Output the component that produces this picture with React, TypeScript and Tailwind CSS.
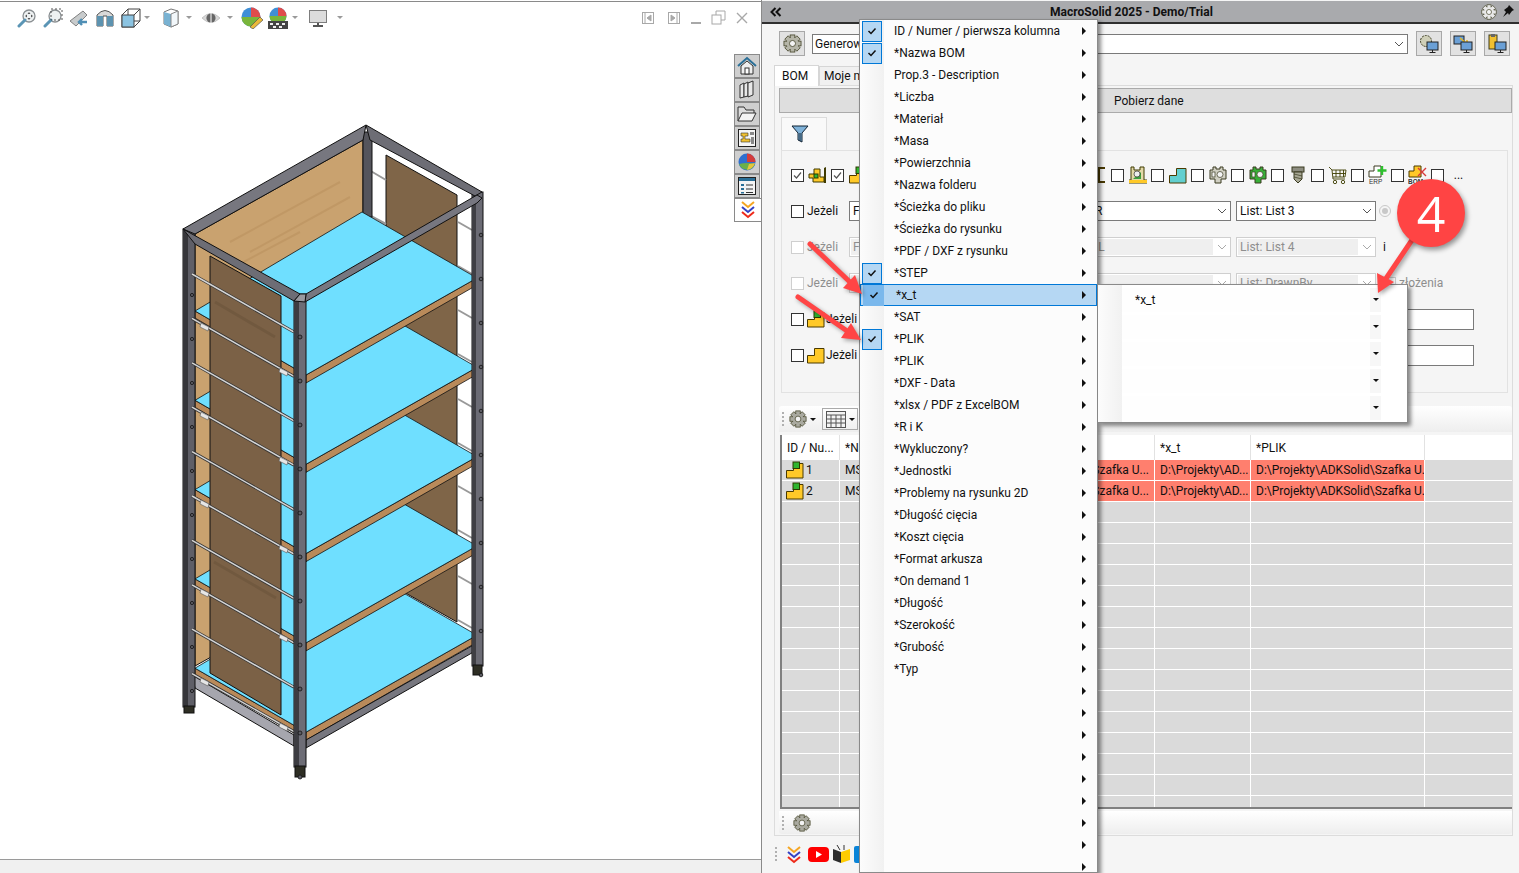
import type { ReactNode } from "react";

const MENU_ITEMS = [
  "ID / Numer / pierwsza kolumna",
  "*Nazwa BOM",
  "Prop.3 - Description",
  "*Liczba",
  "*Materiał",
  "*Masa",
  "*Powierzchnia",
  "*Nazwa folderu",
  "*Ścieżka do pliku",
  "*Ścieżka do rysunku",
  "*PDF / DXF z rysunku",
  "*STEP",
  "*x_t",
  "*SAT",
  "*PLIK",
  "*PLIK",
  "*DXF - Data",
  "*xlsx / PDF z ExcelBOM",
  "*R i K",
  "*Wykluczony?",
  "*Jednostki",
  "*Problemy na rysunku 2D",
  "*Długość cięcia",
  "*Koszt cięcia",
  "*Format arkusza",
  "*On demand 1",
  "*Długość",
  "*Szerokość",
  "*Grubość",
  "*Typ",
  "", "", "", "", "", "", "", "", "",
];
const CHECKED = [0, 1, 11, 12, 14];
const SHELF_STEP = 89.3;

function pts(list: number[][], dy = 0) {
  return list.map(([x, y]) => `${x},${y + dy}`).join(" ");
}

function Caret() {
  return <span className="h-0 w-0 border-x-[3px] border-t-[3px] border-x-transparent border-t-[#9a9a9a]" />;
}

function Gear({ size = 20, fill = "#b5b5a8" }: { size?: number; fill?: string }) {
  const teeth = [0, 45, 90, 135];
  return (
    <svg width={size} height={size} viewBox="0 0 20 20">
      {teeth.map((a) => (
        <rect key={a} x="7.5" y="1" width="5" height="18" fill={fill} stroke="#3d3d20" strokeWidth="0.8" transform={`rotate(${a} 10 10)`} />
      ))}
      <circle cx="10" cy="10" r="6.2" fill={fill} />
      <circle cx="10" cy="10" r="3.2" fill="#f4f4f4" stroke="#3d3d20" strokeWidth="0.8" />
    </svg>
  );
}

function ToolbarIcons() {
  const glass = (
    <>
      <circle cx="12" cy="8" r="6" fill="#eef1f2" stroke="#8a8f92" strokeWidth="1.3" />
      <path d="M8 12 L2 18" stroke="#5b95b5" strokeWidth="3" strokeLinecap="round" />
    </>
  );
  return (
    <div className="flex h-[32px] items-center pl-[17px]">
      <svg className="mr-[6px]" width="20" height="20" viewBox="0 0 20 20">
        {glass}
        <path d="M12 4l1.5 2h-3zM12 12l1.5-2h-3zM8 8l2-1.5v3zM16 8l-2-1.5v3z" fill="#555" />
      </svg>
      <svg className="mr-[6px]" width="20" height="20" viewBox="0 0 20 20">
        {glass}
        <rect x="8" y="1" width="11" height="11" fill="none" stroke="#555" strokeDasharray="2 2" />
      </svg>
      <svg className="mr-[6px]" width="20" height="20" viewBox="0 0 20 20">
        <path d="M1 13 L14 3 L18 7 L7 18 Z" fill="#c8cbcc" stroke="#808080" />
        <path d="M18 14 H10 M13 11 L10 14 L13 17" stroke="#4f8fb5" strokeWidth="2.4" fill="none" />
      </svg>
      <svg className="mr-[6px]" width="20" height="20" viewBox="0 0 20 20">
        <path d="M2 18 V7 Q10 -2 18 7 V18 H12 V8 H8 V18 Z" fill="#d8d8d8" stroke="#555" />
        <rect x="2" y="8" width="6" height="10" fill="#5d93b0" />
        <rect x="12" y="8" width="6" height="10" fill="#5d93b0" />
      </svg>
      <svg className="mr-[3px]" width="20" height="20" viewBox="0 0 20 20">
        <path d="M1 7 L7 1 H19 V13 L13 19 H1 Z" fill="#fff" stroke="#444" />
        <rect x="1" y="7" width="12" height="12" fill="#8cc4e2" stroke="#444" />
        <path d="M7 1 V7 M13 7 L19 1 M13 13 H19" stroke="#444" />
      </svg>
      <Caret />
      <svg className="ml-[11px] mr-[5px]" width="20" height="20" viewBox="0 0 20 20">
        <path d="M3 4 L10 1 L17 3 V16 L10 19 L3 16 Z" fill="#fff" stroke="#777" />
        <path d="M3 4 L10 6 V19 L3 16 Z" fill="#79b2d2" />
        <path d="M10 6 L17 3 V16 L10 19 Z" fill="#f2f7fa" stroke="#888" />
      </svg>
      <Caret />
      <svg className="ml-[9px] mr-[6px]" width="20" height="20" viewBox="0 0 20 20">
        <path d="M1 10 Q10 1 19 10 Q10 19 1 10 Z" fill="#d8d8d8" stroke="#c4c4c4" />
        <circle cx="10" cy="10" r="4.6" fill="#666" />
        <path d="M10 3 V17" stroke="#fff" />
      </svg>
      <Caret />
      <svg className="ml-[8px] mr-[5px]" width="22" height="22" viewBox="0 0 22 22">
        <circle cx="10" cy="10" r="9.5" fill="#3f8fd6" />
        <path d="M10 .5 A9.5 9.5 0 0 1 19.5 10 L10 10 Z" fill="#df4c4c" />
        <path d="M.5 10 H19.5 A9.5 9.5 0 0 1 .5 10 Z" fill="#79b53b" />
        <path d="M9 20 L19 10 L22 13 L12 22 Z" fill="#e9b93a" stroke="#555" strokeWidth=".7" />
      </svg>
      <svg className="mr-[4px]" width="20" height="22" viewBox="0 0 20 22">
        <circle cx="10" cy="9" r="8.5" fill="#3f8fd6" />
        <path d="M10 .5 A8.5 8.5 0 0 1 18.5 9 L10 9 Z" fill="#df4c4c" />
        <path d="M1.5 9 H18.5 A8.5 8.5 0 0 1 10 17.5 A8.5 8.5 0 0 1 1.5 9Z" fill="#79b53b" />
        <rect x="0" y="14" width="20" height="8" fill="#444" />
        <path d="M2 16h3v2H2zM8 16h3v2H8zM14 16h3v2h-3zM5 19h3v2H5zM11 19h3v2h-3z" fill="#eee" />
      </svg>
      <Caret />
      <svg className="ml-[10px] mr-[9px]" width="20" height="20" viewBox="0 0 20 20">
        <rect x="1.5" y="2.5" width="17" height="12" fill="#dcdcdc" stroke="#7d7d7d" />
        <path d="M10 15 V17 M5 18 H15" stroke="#555" strokeWidth="2" />
      </svg>
      <Caret />
    </div>
  );
}

function Cabinet() {
  const rods = Array.from({ length: 10 }, (_, i) => 272 + i * 44.4);
  const sideRods = [220, 264, 308, 352, 397, 441, 484, 528, 574, 618];
  const bolts = Array.from({ length: 11 }, (_, i) => i);
  const clips = [316, 405, 493, 582, 671];
  const shelves = [4, 3, 2, 1, 0];
  return (
    <svg className="shrink-0" width="734" height="826" viewBox="0 32 734 826">
      {/* back panels */}
      <polygon points="195,232 363,138 363,570 195,664" fill="#c9a26f" stroke="#111" />
      <path d="M230 240 L340 180 M250 250 L350 195 M215 275 L300 230" stroke="#b88f5c" strokeWidth="2" opacity=".5" />
      <polygon points="386,153 457,193 457,620 386,580" fill="#7f6548" stroke="#111" />
      {/* rods seen through the open side */}
      <g stroke="#999" strokeWidth="2">
        <line x1="369" y1="168" x2="386" y2="178" />
        <line x1="369" y1="213" x2="386" y2="222" />
        {sideRods.map((y) => (
          <line key={y} x1="458" y1={y} x2="472" y2={y + 8} />
        ))}
      </g>
      <rect x="363" y="130" width="9" height="85" fill="#55555c" stroke="#111" />

      {/* shelves, lowest first */}
      {shelves.map((i) => {
        const dy = i * SHELF_STEP;
        return (
          <g key={i} stroke="#111" strokeWidth=".8">
            <polygon points={pts([[195, 309], [306, 373], [306, 381], [195, 316]], dy)} fill="#b98a5a" />
            <polygon points={pts([[306, 373], [477, 276], [477, 283], [306, 381]], dy)} fill="#b98a5a" />
            <polygon points={pts([[362, 210], [477, 276], [306, 373], [195, 309]], dy)} fill="#6fdfff" />
          </g>
        );
      })}

      {/* bottom rails */}
      <polygon points="306,738 477,641 477,648 306,746" fill="#77777f" stroke="#111" />
      <polygon points="192,673 294,733 294,744 195,686" fill="#a6a6ae" stroke="#111" />

      {/* left leg */}
      <rect x="183" y="227" width="12" height="478" fill="#5f5f67" stroke="#111" />
      <rect x="183" y="227" width="5" height="478" fill="#37373b" />
      <rect x="184" y="704" width="10" height="7" fill="#2e2e24" stroke="#111" />

      {/* front panel and rods */}
      <polygon points="210,254 281,294 281,713 210,671" fill="#7b6146" stroke="#111" />
      <path d="M215 300 L275 335 M220 420 L278 455 M214 560 L276 596" stroke="#6c543b" strokeWidth="3" opacity=".6" />
      <g>
        {rods.map((y) => (
          <g key={y}>
            <line x1="192" y1={y} x2="294" y2={y + 58} stroke="#333" strokeWidth="3" />
            <line x1="192" y1={y} x2="294" y2={y + 58} stroke="#d5d5d5" strokeWidth="1.5" />
          </g>
        ))}
        {clips.map((y) => (
          <g key={y} fill="#e6e6e6" stroke="#555" strokeWidth=".6">
            <polygon points={`201,${y + 5} 209,${y + 9} 208,${y + 13} 200,${y + 9}`} />
            <polygon points={`280,${y + 50} 288,${y + 54} 287,${y + 58} 279,${y + 54}`} />
          </g>
        ))}
      </g>

      {/* right and front legs */}
      <rect x="472" y="190" width="11" height="474" fill="#6b6b74" stroke="#111" />
      <rect x="472" y="190" width="4" height="474" fill="#3f3f44" />
      <rect x="473" y="663" width="9" height="10" fill="#2e2e24" stroke="#111" />
      <rect x="294" y="292" width="12" height="473" fill="#6d6d76" stroke="#111" />
      <rect x="294" y="292" width="5" height="473" fill="#3d3d42" />
      <rect x="295" y="764" width="10" height="11" fill="#2e2e24" stroke="#111" />
      {bolts.map((i) => (
        <g key={i} fill="#5b5b62" stroke="#111" strokeWidth=".8">
          <circle cx="300" cy={335 + i * 44} r="2" />
          <circle cx="481" cy={233 + i * 44} r="1.8" />
          {i < 10 ? <circle cx="192" cy={293 + i * 44} r="1.6" /> : null}
        </g>
      ))}

      {/* top frame */}
      <g stroke="#111">
        <polygon points="366,123 482,190 475,194 370,138" fill="#6d6d75" />
        <polygon points="183,227 366,123 363,138 195,232" fill="#77777f" />
        <polygon points="183,227 300,292 294,299 195,242" fill="#6d6d75" />
        <polygon points="306,292 477,193 482,196 477,201 305,300" fill="#777780" />
        <polygon points="294,299 300,292 306,292 305,300" fill="#99999f" />
      </g>
    </svg>
  );
}

function SideTabs() {
  const tab = "flex h-[24px] w-[26px] items-center justify-center border border-[#8a8a8a] bg-[#cfcfcf]";
  return (
    <div className="mt-[20px] flex w-[26px] shrink-0 flex-col">
      <div className={tab}>
        <svg width="20" height="20" viewBox="0 0 20 20">
          <path d="M1 10 L10 2 L19 10" fill="none" stroke="#2a6f97" strokeWidth="2" />
          <path d="M4 10 V18 H16 V10 L10 5 Z" fill="#efefef" stroke="#333" />
          <rect x="8" y="12" width="4" height="6" fill="#fff" stroke="#333" />
        </svg>
      </div>
      <div className={tab}>
        <svg width="18" height="20" viewBox="0 0 18 20" fill="#e8e8e8" stroke="#333">
          <path d="M2 5 L6 3 V17 L2 18 Z" />
          <path d="M6 4 L10 2 V16 L6 17 Z" />
          <path d="M10 3 L15 1 V15 L10 17 Z" />
        </svg>
      </div>
      <div className={tab}>
        <svg width="20" height="18" viewBox="0 0 20 18">
          <path d="M1 16 V2 H7 L9 5 H17 V8" fill="#ddd" stroke="#333" />
          <path d="M1 16 L5 8 H19 L15 16 Z" fill="#f3f3f3" stroke="#333" />
        </svg>
      </div>
      <div className={tab}>
        <svg width="18" height="18" viewBox="0 0 18 18">
          <rect x=".5" y=".5" width="17" height="17" fill="#f5f5f5" stroke="#222" />
          <path d="M3 4 H10 V7 H7 V10 H12 V13 H3 V10 H5 V7 H3 Z" fill="#f0c030" stroke="#333" strokeWidth=".6" />
          <rect x="13" y="8" width="3" height="7" fill="#888" />
          <rect x="12" y="3" width="4" height="3" fill="#888" />
        </svg>
      </div>
      <div className={tab}>
        <svg width="18" height="18" viewBox="0 0 18 18">
          <circle cx="9" cy="9" r="8.5" fill="#2f6fd0" />
          <path d="M9 .5 A8.5 8.5 0 0 1 17.5 9 L9 9 Z" fill="#d33c3c" />
          <path d="M1 11 Q9 9 17 11 A8.5 8.5 0 0 1 1 11 Z" fill="#6ab04a" />
          <path d="M9 17 Q15 16 17 10 L11 11 Z" fill="#e5c53c" />
        </svg>
      </div>
      <div className={tab}>
        <svg width="18" height="18" viewBox="0 0 18 18">
          <rect x=".5" y=".5" width="17" height="17" fill="#f4f4f4" stroke="#222" />
          <rect x="1" y="1" width="16" height="3" fill="#2a6f97" />
          <path d="M3 7h3v2H3zM3 11h3v2H3zM3 15h3v1.500H3z" fill="#2a6f97" />
          <path d="M8 8h7M8 12h7M8 15.500h7" stroke="#333" />
        </svg>
      </div>
      <div className="flex h-[24px] w-[27px] items-center justify-center border border-r-0 border-[#8a8a8a] bg-white">
        <Chevrons />
      </div>
    </div>
  );
}

function Chevrons() {
  return (
    <svg width="16" height="19" viewBox="0 0 16 19" fill="none" strokeWidth="2">
      <path d="M2 2 L8 7 L14 2" stroke="#f5a623" />
      <path d="M2 7 L8 12 L14 7" stroke="#3341c5" />
      <path d="M2 12 L8 17 L14 12" stroke="#ee2a1b" />
    </svg>
  );
}

function Check({ checked, faded }: { checked?: boolean; faded?: boolean }) {
  return (
    <span className={`flex h-[13px] w-[13px] shrink-0 items-center justify-center border bg-white ${faded ? "border-[#cfcfcf]" : "border-[#333]"}`}>
      {checked ? (
        <svg width="9" height="9" viewBox="0 0 9 9" fill="none" stroke="#555" strokeWidth="1.2">
          <path d="M1 4.500 L3.500 7 L8 1.500" />
        </svg>
      ) : null}
    </span>
  );
}

function LShape({ green, fill = "#ffc928" }: { green?: boolean; fill?: string }) {
  return (
    <svg width="18" height="18" viewBox="0 0 18 18">
      <path d="M.5 17 V9.500 H7.500 V2.500 H17 V17 Z" fill={fill} stroke="#4a3a00" />
      {green ? <rect x="7" y="1" width="6.500" height="6.500" fill="#2fb52f" stroke="#2d3a00" /> : null}
    </svg>
  );
}

function FilterIcon({ index }: { index: number }) {
  switch (index) {
    case 0:
      return (
        <svg width="19" height="18" viewBox="0 0 19 18">
          <path d="M1 8 H6 V3 H12 V11 H16 V16 H5 V12 H1 Z" fill="#ffc928" stroke="#3f3a00" />
          <rect x="6" y="8" width="4" height="4" fill="#2fb52f" stroke="#2d3a00" />
          <path d="M16 10 V2 L18 1 V17 H16" fill="#3f3a00" />
        </svg>
      );
    case 7:
      return (
        <svg width="18" height="18" viewBox="0 0 18 18" fill="none" stroke="#4a3a00" strokeWidth="2">
          <path d="M16 2 H10 V16 H16" />
        </svg>
      );
    case 8:
      return (
        <svg width="18" height="18" viewBox="0 0 18 18">
          <path d="M2 1 H5 V4 H11 V1 H15 V14 H18 V17 H0 V14 H2 Z" fill="#e3d9a8" stroke="#3f3a00" />
          <rect x="0" y="14" width="18" height="3" fill="#ffc928" />
          <path d="M4 13 L12 6 V13 Z" fill="#3da03d" />
          <circle cx="8" cy="8" r="3" fill="#eee" stroke="#333" strokeWidth=".7" />
        </svg>
      );
    case 9:
      return <LShape fill="#62cfcf" />;
    case 10:
    case 11: {
      const c = index === 10 ? "#d0cfc2" : "#38b038";
      return (
        <svg width="18" height="18" viewBox="0 0 18 18">
          <path d="M4 1 H7 V3 H11 V1 H14 V4 H17 V13 H12 V17 H6 V13 H1 V4 H4 Z" fill={c} stroke="#3a3a20" />
          <rect x="3" y="6" width="3" height="5" fill="#f4f4f4" stroke="#3a3a20" strokeWidth=".7" />
          <circle cx="11" cy="8.500" r="3" fill="#f4f4f4" stroke="#3a3a20" strokeWidth=".7" />
        </svg>
      );
    }
    case 12:
      return (
        <svg width="14" height="18" viewBox="0 0 14 18">
          <rect x="1" y="1" width="12" height="5" fill="#8d8d80" stroke="#3a3a20" />
          <path d="M3 6 H11 V13 L7 17 L3 13 Z" fill="#a7a794" stroke="#3a3a20" />
          <path d="M3 8 L11 10 M3 11 L11 13" stroke="#3a3a20" strokeWidth=".7" />
        </svg>
      );
    case 13:
      return (
        <svg width="19" height="19" viewBox="0 0 19 19" fill="none" stroke="#3d3d00" strokeWidth=".9">
          <path d="M1 1 L4 4 L5 13 H17" />
          <path d="M4 4 H18 L17 11 H5 M8 4 V11 M12 4 V11 M15.500 4 V11 M4.500 7.500 H17.500" />
          <circle cx="7" cy="16" r="1.700" />
          <circle cx="15" cy="16" r="1.700" />
        </svg>
      );
    case 14:
      return (
        <svg width="19" height="20" viewBox="0 0 19 20">
          <path d="M1 12 V6 H6 V1 H13 V12 Z" fill="#fff" stroke="#3a3a20" />
          <path d="M14 1 V10 M9.500 5.500 H18.500" stroke="#2fc02f" strokeWidth="2.400" />
          <text x="1" y="19" fontSize="6.500" fill="#333" fontFamily="Liberation Sans">ERP</text>
        </svg>
      );
    case 15:
      return (
        <svg width="19" height="20" viewBox="0 0 19 20">
          <path d="M1 12 V6 H6 V1 H13 V12 Z" fill="#ffc928" stroke="#4a3a00" />
          <path d="M10 3 L18 11 M18 3 L10 11" stroke="#d63a3a" strokeWidth="1.400" />
          <text x="0" y="19" fontSize="6.500" fontWeight="700" fill="#333" fontFamily="Liberation Sans">BOM</text>
        </svg>
      );
    case 1:
      return <LShape green />;
    case 16:
      return <span className="self-end pb-[1px] pl-[2px] leading-none">...</span>;
    default:
      return <LShape />;
  }
}

function Combo({ className, text, disabled, inset }: { className: string; text?: string; disabled?: boolean; inset?: string }) {
  return (
    <div className={`flex h-[20px] shrink-0 items-center border bg-white ${disabled ? "border-[#cfcfcf] text-[#8e8e8e]" : "border-[#7a7a7a]"} ${className}`}>
      <span className={`mx-[1px] h-[16px] flex-1 overflow-hidden whitespace-nowrap pl-[2px] leading-[16px] ${disabled ? "bg-[#efefef]" : ""} ${inset ?? ""}`}>{text}</span>
      <svg className="mx-[3px] shrink-0" width="10" height="6" viewBox="0 0 10 6" fill="none" stroke={disabled ? "#aaa" : "#555"}>
        <path d="M1 1 L5 5 L9 1" />
      </svg>
    </div>
  );
}

function FormRow({ children, faded, icon }: { children: ReactNode; faded?: boolean; icon?: ReactNode }) {
  return (
    <div className={`flex h-[36px] items-center pl-[9px] ${faded ? "text-[#8e8e8e]" : ""}`}>
      <Check faded={faded} />
      {icon ? <span className="ml-[3px] flex w-[19px] shrink-0">{icon}</span> : null}
      <span className={`w-[44px] shrink-0 pl-[3px] ${icon ? "-ml-[22px] w-[44px] pl-[22px]" : ""}`}>Jeżeli</span>
      {children}
    </div>
  );
}

function IconButton({ children }: { children: ReactNode }) {
  return <div className="flex h-[25px] w-[26px] items-center justify-center border border-[#a8a8a8] bg-[#e2e2e2]">{children}</div>;
}

function Monitor({ children }: { children: ReactNode }) {
  return (
    <svg width="20" height="20" viewBox="0 0 20 20">
      {children}
      <rect x="8" y="8" width="11" height="8" fill="#6ba0d6" stroke="#222" />
      <path d="M13.500 16 V18 M10.500 18.500 H16.500" stroke="#222" />
    </svg>
  );
}

function DataGrid() {
  const widths = ["w-[58px]", "w-[164px]", "w-[151px]", "w-[96px]", "w-[174px]"];
  const headers = ["ID / Nu...", "*Nazwa BOM", "", "*x_t", "*PLIK"];
  const blanks = Array.from({ length: 15 }, (_, i) => i);
  const rows = ["1", "2"];
  return (
    <div className="ml-[5px] mt-[3px] h-[374px] w-[732px] overflow-hidden border-b-2 border-l-2 border-[#808080] bg-[#dadada]">
      <div className="flex h-[25px] bg-white">
        {headers.map((h, i) => (
          <div key={i} className={`${widths[i]} flex shrink-0 items-center border-r border-[#e2e2e2] pl-[5px]`}>{h}</div>
        ))}
      </div>
      {rows.map((r) => (
        <div key={r} className="flex h-[21px] border-b border-white">
          <div className={`${widths[0]} flex shrink-0 items-center gap-[2px] border-r border-white pl-[4px]`}>
            <LShape green />
            {r}
          </div>
          <div className={`${widths[1]} flex shrink-0 items-center border-r border-white pl-[5px]`}>MS</div>
          <div className={`${widths[2]} flex shrink-0 items-center justify-end overflow-hidden whitespace-nowrap border-r border-white bg-[#ff7f6e] pr-[5px]`}>D:\Projekty\ADKSolid\Szafka U...</div>
          <div className={`${widths[3]} flex shrink-0 items-center overflow-hidden whitespace-nowrap border-r border-white bg-[#ff7f6e] pl-[5px]`}>D:\Projekty\AD...</div>
          <div className={`${widths[4]} flex shrink-0 items-center overflow-hidden whitespace-nowrap border-r border-white bg-[#ff7f6e] pl-[5px]`}>D:\Projekty\ADKSolid\Szafka U...</div>
        </div>
      ))}
      {blanks.map((b) => (
        <div key={b} className="flex h-[21px] border-b border-white">
          {widths.map((w) => (
            <div key={w} className={`${w} shrink-0 border-r border-white`} />
          ))}
        </div>
      ))}
    </div>
  );
}

function Gripper() {
  return (
    <div className="flex flex-col gap-[2px]">
      {[0, 1, 2, 3].map((i) => (
        <span key={i} className="h-[2px] w-[2px] bg-[#b0b0b0]" />
      ))}
    </div>
  );
}

function MacroPanel() {
  const filterIcons = Array.from({ length: 17 }, (_, i) => i);
  return (
    <div className="relative h-[873px] flex-1 overflow-hidden border-l border-[#8a8a8a] bg-[#f5f5f5] text-[12px] text-[#111]">
      {/* title bar */}
      <div className="mt-[1px] flex h-[23px] items-center border-b-2 border-[#2f2f2f] bg-[#a9aaad] pl-[8px] pr-[4px]">
        <svg width="12" height="10" viewBox="0 0 12 10" fill="none" stroke="#111" strokeWidth="2">
          <path d="M5.500 1 L1.500 5 L5.500 9 M10.500 1 L6.500 5 L10.500 9" />
        </svg>
        <span className="flex-1 text-center font-bold">MacroSolid 2025 - Demo/Trial</span>
        <Gear size={16} fill="#e8e8e8" />
        <svg className="ml-[3px]" width="15" height="15" viewBox="0 0 15 15" fill="#111">
          <path d="M9 1 L14 6 L12 7 L9 11 L8 9 L3 13 L6 8 L4 6 L8 3 Z" />
        </svg>
      </div>

      {/* generator row */}
      <div className="mt-[7px] flex h-[25px] items-center pl-[17px]">
        <IconButton><Gear size={19} /></IconButton>
        <div className="ml-[7px] flex h-[20px] w-[596px] items-center border border-[#7a7a7a] bg-white pl-[2px]">
          <span className="flex-1">Generowanie</span>
          <svg className="mr-[3px]" width="10" height="6" viewBox="0 0 10 6" fill="none" stroke="#555">
            <path d="M1 1 L5 5 L9 1" />
          </svg>
        </div>
        <div className="ml-[8px] flex gap-[8px]">
          <IconButton>
            <Monitor><circle cx="7" cy="7" r="5.500" fill="#cfcfb8" stroke="#3d3d20" strokeDasharray="2 1" /></Monitor>
          </IconButton>
          <IconButton>
            <Monitor><rect x="1" y="2" width="10" height="8" fill="#6ba0d6" stroke="#222" /><path d="M7 4 L14 10 M14 6 V10 H10" stroke="#e8b820" strokeWidth="1.500" fill="none" /></Monitor>
          </IconButton>
          <IconButton>
            <Monitor><rect x="2" y="1" width="8" height="14" fill="#f0c030" stroke="#3d3d20" /><rect x="4" y="0" width="4" height="3" fill="#666" /></Monitor>
          </IconButton>
        </div>
      </div>

      {/* tabs */}
      <div className="ml-[12px] mt-[8px] flex h-[21px] items-end">
        <div className="z-10 -mb-px flex h-[21px] w-[45px] items-center border border-b-0 border-[#d6d6d6] bg-white pl-[7px]">BOM</div>
        <div className="flex h-[19px] w-[90px] items-center border border-b-0 border-[#d6d6d6] bg-[#f0f0f0] pl-[4px]">Moje miejsca</div>
      </div>
      <div className="ml-[12px] h-[751px] w-[739px] border border-[#dcdcdc] bg-[#f5f5f5]">
        <div className="ml-[4px] mt-[2px] flex h-[25px] w-[733px] items-center border border-[#aaaaaa] bg-[#dedede] pl-[334px]">Pobierz dane</div>

        <div className="ml-[6px] mt-[4px] flex h-[33px] w-[46px] items-center justify-center border border-b-0 border-[#dcdcdc] bg-[#f9f9f9] pr-[8px]">
          <svg width="18" height="18" viewBox="0 0 18 18">
            <path d="M1 1 H17 L11 8 V17 L7 15 V8 Z" fill="#7fb2d9" stroke="#123" />
            <path d="M9 8 V16" stroke="#123" />
          </svg>
        </div>
        <div className="ml-[6px] h-[243px] w-[727px] border border-[#e2e2e2] bg-[#f5f5f5] pt-[6px]">
          <div className="flex h-[36px] items-center pl-[9px]">
            {filterIcons.map((i) => (
              <div key={i} className="flex h-full w-[40px] shrink-0 items-center">
                <Check checked={i < 2} />
                <span className="ml-[4px] flex w-[19px] justify-center"><FilterIcon index={i} /></span>
              </div>
            ))}
          </div>
          <FormRow>
            <Combo className="ml-[1px] w-[149px]" text="F" />
            <Combo className="ml-[5px] w-[228px]" text="R" inset="pl-[90px]" />
            <Combo className="ml-[5px] w-[140px]" text="List: List 3" />
            <span className="ml-[3px] flex h-[12px] w-[12px] items-center justify-center rounded-full border border-[#c8c8c8]">
              <span className="h-[6px] w-[6px] rounded-full bg-[#c8c8c8]" />
            </span>
          </FormRow>
          <FormRow faded>
            <Combo className="ml-[1px] w-[149px]" text="F" disabled />
            <Combo className="ml-[5px] w-[228px]" text="IL" inset="pl-[90px]" disabled />
            <Combo className="ml-[5px] w-[140px]" text="List: List 4" disabled />
            <span className="ml-[7px] text-[#111]">i</span>
          </FormRow>
          <FormRow faded>
            <Combo className="ml-[1px] w-[149px]" disabled />
            <Combo className="ml-[5px] w-[228px]" disabled />
            <Combo className="ml-[5px] w-[140px]" text="List: DrawnBy" disabled />
            <span className="ml-[7px]"><Check faded /></span>
            <span className="ml-[3px]">złożenia</span>
          </FormRow>
          <FormRow icon={<LShape green />}>
            <div className="ml-auto mr-[33px] h-[21px] w-[67px] border border-[#7a7a7a] bg-white" />
          </FormRow>
          <FormRow icon={<LShape />}>
            <div className="ml-auto mr-[33px] h-[21px] w-[67px] border border-[#7a7a7a] bg-white" />
          </FormRow>
        </div>

        <div className="ml-[4px] mt-[13px] flex h-[26px] w-[733px] items-center rounded-t-[3px] bg-gradient-to-b from-white to-[#eeeeee] pl-[3px]">
          <Gripper />
          <span className="ml-[5px]"><Gear size={18} fill="#aaaaa0" /></span>
          <span className="ml-[3px] h-0 w-0 border-x-[3px] border-t-[3px] border-x-transparent border-t-[#111]" />
          <span className="ml-[6px] flex h-[22px] w-[36px] items-center gap-[3px] border border-[#aaa] pl-[3px]">
            <svg width="20" height="17" viewBox="0 0 20 17" fill="#f3f3f3" stroke="#555">
              <rect x=".5" y=".5" width="19" height="16" />
              <path d="M.5 4 H19.500 M.5 8 H19.500 M.5 12 H19.500 M5 4 V16 M10 4 V16 M15 4 V16" />
            </svg>
            <span className="h-0 w-0 border-x-[3px] border-t-[3px] border-x-transparent border-t-[#111]" />
          </span>
        </div>
        <DataGrid />
        <div className="ml-[4px] mt-[2px] flex h-[23px] w-[733px] items-center rounded-b-[3px] bg-gradient-to-b from-white to-[#eeeeee] pl-[3px]">
          <Gripper />
          <span className="ml-[9px]"><Gear size={18} fill="#aaaaa0" /></span>
        </div>
      </div>

      {/* bottom links */}
      <div className="ml-[12px] mt-[2px] flex h-[32px] items-center gap-[3px] pl-[1px]">
        <Gripper />
        <span className="ml-[6px]"><Chevrons /></span>
        <svg className="ml-[3px]" width="21" height="15" viewBox="0 0 21 15">
          <rect width="21" height="15" rx="4" fill="#ff0000" />
          <path d="M8 4 L14 7.500 L8 11 Z" fill="#fff" />
        </svg>
        <svg className="ml-[1px]" width="17" height="18" viewBox="0 0 17 18">
          <path d="M0 4 L8 7 V18 L0 15 Z" fill="#2b2b2b" />
          <path d="M8 7 L17 4 V15 L8 18 Z" fill="#ffcc00" />
          <path d="M4 0 L7 5 M11 0 V5" stroke="#333" />
        </svg>
        <span className="ml-[1px] h-[17px] w-[10px] rounded-[2px] bg-[#0a84d8]" />
      </div>

      {/* column chooser menu */}
      <div className="absolute left-[97px] top-[19px] h-[854px] w-[239px] overflow-hidden border border-[#8a8a8a] bg-[#fcfcfc] shadow-[3px_3px_4px_rgba(0,0,0,0.45)]">
        <div className="absolute bottom-0 left-0 top-0 w-[24px] bg-gradient-to-r from-[#fcfcfc] to-[#f1f1f1]" />
        {MENU_ITEMS.map((label, i) => {
          const active = i === 12;
          const checked = CHECKED.includes(i);
          return (
            <div key={i} className={`relative flex h-[22px] items-center ${active ? "border border-[#0078d7] bg-[#b5d7f3]" : ""}`}>
              <span
                className={`ml-[2px] flex h-[21px] w-[20px] shrink-0 items-center justify-center ${active ? "-ml-px w-[21px] bg-[#7ab8ec]" : ""} ${checked && !active ? "border border-[#0078d7] bg-[#b5d7f3]" : ""}`}
              >
                {checked ? (
                  <svg width="10" height="8" viewBox="0 0 10 8" fill="none" stroke="#111" strokeWidth="1.500">
                    <path d="M1.500 4 L4 6.500 L8.500 1.500" />
                  </svg>
                ) : null}
              </span>
              <span className={`flex-1 whitespace-nowrap ${active ? "ml-[12px]" : "ml-[12px]"}`}>{label}</span>
              <span className={`h-0 w-0 border-y-[4px] border-l-[4px] border-y-transparent border-l-[#111] ${active ? "mr-[10px]" : "mr-[11px]"}`} />
            </div>
          );
        })}
      </div>

      {/* submenu with the column fields */}
      <div className="absolute left-[336px] top-[284px] h-[139px] w-[310px] border border-[#8a8a8a] border-l-0 bg-white shadow-[3px_3px_4px_rgba(0,0,0,0.45)]">
        <div className="flex h-full">
          <div className="w-[24px] bg-gradient-to-r from-[#fcfcfc] to-[#f1f1f1]" />
          <div className="flex flex-1 flex-col pt-[1px]">
            {["*x_t", "", "", "", ""].map((v, i) => (
              <div key={i} className="flex h-[27px] items-center">
                <span className="flex h-[24px] w-[248px] items-center bg-[#fefefe] pl-[13px]">{v}</span>
                <span className="flex h-[24px] w-[11px] items-center justify-center bg-[#f7f7f7]">
                  <span className="h-0 w-0 border-x-[3px] border-t-[3px] border-x-transparent border-t-[#111]" />
                </span>
              </div>
            ))}
          </div>
        </div>
      </div>
    </div>
  );
}

function Annotations() {
  const arrows = [
    { tail: "810,244 852,284", head: "862,294 843,288 855,275" },
    { tail: "798,297 850,333", head: "861,340 841,338 851,323" },
    { tail: "1412,240 1385,280", head: "1378,293 1377,273 1394,282" },
  ];
  return (
    <div className="pointer-events-none absolute inset-0 overflow-hidden">
      <svg className="absolute left-0 top-0 drop-shadow-[2px_2px_2px_rgba(0,0,0,0.35)]" width="1519" height="873">
        {arrows.map((a) => (
          <g key={a.tail}>
            <polyline points={a.tail} fill="none" stroke="#ff4545" strokeWidth="5" strokeLinecap="round" />
            <polygon points={a.head} fill="#ff4545" />
          </g>
        ))}
      </svg>
      <div className="absolute left-[1397px] top-[179px] flex h-[68px] w-[68px] items-center justify-center rounded-full bg-[#ff4444] font-['Open_Sans',sans-serif] text-[50px] leading-none text-white shadow-[2px_3px_5px_rgba(0,0,0,0.4)]">
        4
      </div>
    </div>
  );
}

export default function App() {
  return (
    <div className="relative flex h-[873px] w-[1519px] overflow-hidden bg-white font-[Roboto,sans-serif]">
      <div className="flex h-[873px] w-[761px] shrink-0 flex-col">
        <div className="mt-[1px] h-px bg-[#8a8a8a]" />
        <div className="flex items-start justify-between">
          <ToolbarIcons />
          <div className="flex h-[32px] items-center gap-[10px] pr-[13px]">
            <svg width="14" height="14" viewBox="0 0 14 14" fill="none" stroke="#a8a8a8">
              <rect x="1.500" y="1.500" width="11" height="11" />
              <path d="M4 1.500 V12.500" />
              <path d="M10 4 L6 7 L10 10 Z" fill="#a8a8a8" />
            </svg>
            <svg className="ml-[2px]" width="14" height="14" viewBox="0 0 14 14" fill="none" stroke="#a8a8a8">
              <rect x="1.500" y="1.500" width="11" height="11" />
              <path d="M10 1.500 V12.500" />
              <path d="M4 4 L8 7 L4 10 Z" fill="#a8a8a8" />
            </svg>
            <span className="mt-[10px] h-[2px] w-[10px] bg-[#a8a8a8]" />
            <svg width="15" height="15" viewBox="0 0 15 15" fill="none" stroke="#a8a8a8">
              <rect x="1" y="5" width="9" height="9" />
              <path d="M5 5 V1 H14 V10 H10" />
            </svg>
            <svg width="12" height="12" viewBox="0 0 12 12" stroke="#a8a8a8" strokeWidth="1.400">
              <path d="M1 1 L11 11 M11 1 L1 11" />
            </svg>
          </div>
        </div>
        <div className="flex h-[825px] items-start">
          <Cabinet />
          <SideTabs />
        </div>
        <div className="h-[15px] border-t border-[#9a9a9a] bg-[#f0f0f0]" />
      </div>
      <MacroPanel />
      <Annotations />
    </div>
  );
}
